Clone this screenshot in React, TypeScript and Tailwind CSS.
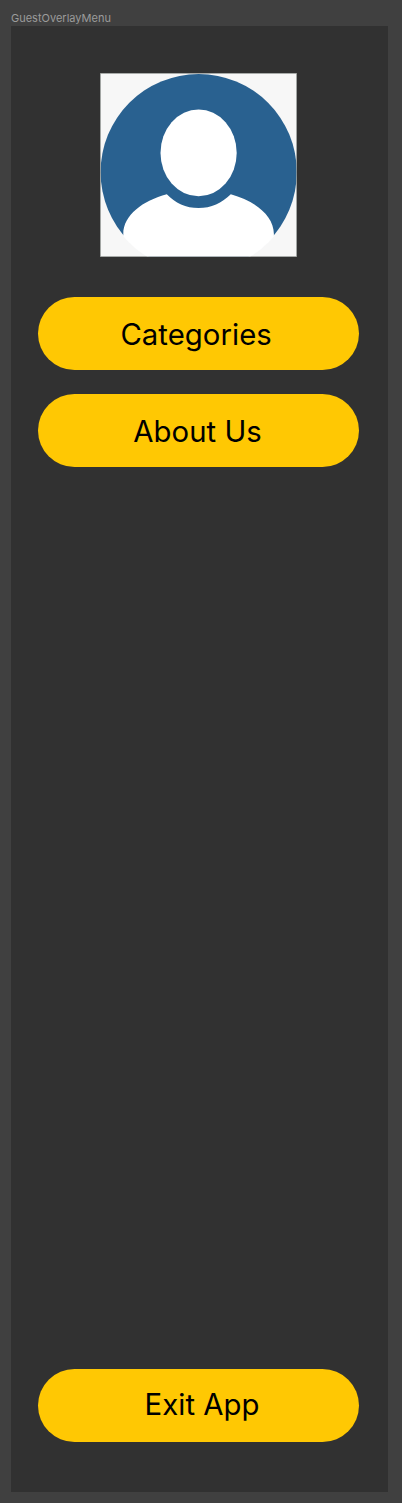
import React from "react";

function Avatar() {
  return (
    <svg
      className="ml-[89px] block h-[184px] w-[197px]"
      viewBox="100 73 197 184"
      role="img"
      aria-label="Guest"
    >
      <defs>
        <clipPath id="frame">
          <rect x="100.3" y="73.3" width="196.4" height="183.4" />
        </clipPath>
        <clipPath id="disc">
          <ellipse cx="198.7" cy="172.2" rx="98.9" ry="99" />
        </clipPath>
      </defs>
      <g clipPath="url(#frame)">
        <rect x="100" y="73" width="197" height="184" fill="#f7f7f7" />
        <ellipse cx="198.7" cy="172.2" rx="98.1" ry="98.2" fill="#296190" />
        <g clipPath="url(#disc)">
          <path
            d="M123.3 238V234C123.3 215 143 200.5 166.8 194.2C175 203 186 208 198.6 208C211 208 222 203 230.8 194.2C254 200.5 273.9 215 273.9 234V275H123.3Z"
            fill="#fff"
          />
        </g>
        <ellipse cx="198.6" cy="152.9" rx="38.1" ry="43.4" fill="#fff" />
      </g>
      <rect x="100.5" y="73.5" width="196" height="183" fill="none" stroke="#8b918e" strokeOpacity="0.5" />
    </svg>
  );
}

function MenuButton({ label, offset }: { label: string; offset: string }) {
  return (
    <button className="flex h-[73.3px] w-[320.8px] shrink-0 items-center justify-center rounded-full bg-[#ffc803] text-[29.3px] leading-none font-[370] tracking-[0.05px] text-black">
      <span className={`whitespace-nowrap ${offset}`}>{label}</span>
    </button>
  );
}

export default function App() {
  return (
    <div className="h-[1503px] w-[402px] bg-[#404040] pl-[11px] font-['Inter',sans-serif]">
      <div className="h-[26px] pt-[11px] text-[11px] leading-[14px] text-[#9b9b9b]">
        GuestOverlayMenu
      </div>
      <main className="flex h-[1465.5px] w-[377.3px] flex-col bg-[#313131] pt-[47px] pb-[49.5px]">
        <Avatar />
        <nav className="mt-[40px] ml-[27.2px] flex flex-1 flex-col gap-[23.7px]">
          <MenuButton label="Categories" offset="-translate-x-[2.5px] translate-y-[1px]" />
          <MenuButton label="About Us" offset="-translate-x-[1px] translate-y-[1px]" />
          <div className="mt-auto">
            <MenuButton label="Exit App" offset="translate-x-[3.5px] -translate-y-[1px]" />
          </div>
        </nav>
      </main>
    </div>
  );
}
